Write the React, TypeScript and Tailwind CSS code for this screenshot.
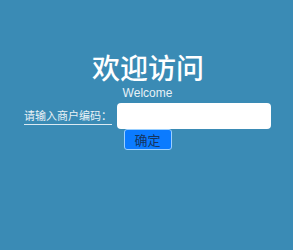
import React from "react";

export default function App() {
  return (
    <div className="w-[293px] h-[250px] bg-[#3a8bb5] flex flex-col items-center text-white overflow-hidden font-['Liberation_Sans','Noto_Sans_CJK_SC',sans-serif]">
      <h1 className="mt-[50px] text-[28px] leading-[34px] font-medium pl-[3px] font-['Noto_Sans_CJK_SC',sans-serif]">
        欢迎访问
      </h1>
      <div className="mt-[2px] text-[12px] leading-[14px] text-[#e6f1f7] pl-[2px]">Welcome</div>
      <div className="flex items-center gap-[5px] mt-[3px] pl-[2px]">
        <span className="text-[11px] leading-[15px] text-[#e9f2f7] border-b border-[#dbeaf3] pb-[1px] font-['Noto_Sans_CJK_SC',sans-serif]">
          请输入商户编码：
        </span>
        <input
          type="text"
          className="w-[154px] h-[26px] bg-white rounded-[4px] outline-none border-0"
        />
      </div>
      <button className="ml-[2px] w-[48px] h-[21px] bg-[#0b7bff] border border-[#9bd0ff] rounded-[3px] text-[13px] leading-[18px] text-[#15355f] font-['Noto_Sans_CJK_SC',sans-serif]">
        确定
      </button>
    </div>
  );
}
